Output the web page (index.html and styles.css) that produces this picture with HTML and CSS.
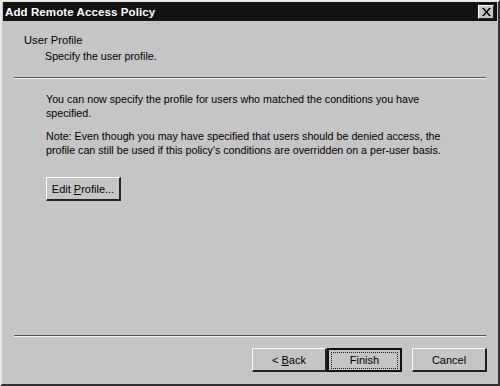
FILE: index.html
```html
<!DOCTYPE html>
<html>
  <head>
    <link rel="stylesheet" href="styles.css">
  </head>
  <body>
    <div id="window">
      <div id="titlebar">
        <span id="title">Add Remote Access Policy</span>
        <button id="closeButton">
          <svg width="9" height="8" viewBox="0 0 9 8">
            <path d="M0 0h2l2.5 3 2.5-3h2l-3.5 4 3.5 4h-2l-2.5-3-2.5 3h-2l3.5-4z" fill="#000"/>
          </svg>
        </button>
      </div>
      <div id="header">
        <p class="headTitle">User Profile</p>
        <p class="headSub">Specify the user profile.</p>
      </div>
      <div class="separator"></div>
      <div id="content">
        <p>You can now specify the profile for users who matched the conditions you have specified.</p>
        <p>Note: Even though you may have specified that users should be denied access, the profile can still be used if this policy's conditions are overridden on a per-user basis.</p>
        <button class="winButton" id="editProfile">Edit <u>P</u>rofile...</button>
      </div>
      <div class="separator"></div>
      <div id="footer">
        <button class="winButton">&lt; <u>B</u>ack</button>
        <button class="winButton default"><span class="focus">Finish</span></button>
        <button class="winButton" id="cancel">Cancel</button>
      </div>
    </div>
  </body>
</html>
```

FILE: styles.css
```css
body {
  margin: 0;
  font-family: 'Liberation Sans', Arial, sans-serif;
  font-size: 10.7px;
  color: #000000;
}

#window {
  width: 500px;
  height: 386px;
  box-sizing: border-box;
  background-color: #c5c5c5;
  border-top: 2px solid #e8e8e8;
  border-left: 2px solid #e8e8e8;
  border-right: 2px solid #333333;
  border-bottom: 2px solid #333333;
  display: flex;
  flex-direction: column;
}

#titlebar {
  margin: 0 1px 0 1px;
  height: 19px;
  background-color: #121212;
  display: flex;
  align-items: center;
  justify-content: space-between;
  padding: 0 3px 0 2px;
}

#title {
  color: #ffffff;
  font-weight: bold;
  font-size: 11.5px;
  letter-spacing: 0.1px;
}

#closeButton {
  width: 16px;
  height: 14px;
  padding: 0;
  background-color: #c5c5c5;
  border-top: 1px solid #ffffff;
  border-left: 1px solid #ffffff;
  border-right: 1px solid #202020;
  border-bottom: 1px solid #202020;
  display: flex;
  align-items: center;
  justify-content: center;
}

#header {
  height: 56px;
  padding: 12px 0 0 22px;
  box-sizing: border-box;
}

#header p {
  margin: 0;
  line-height: 14px;
}

.headTitle {
  font-size: 11.2px;
}

.headSub {
  padding-left: 21px;
  margin-top: 2px !important;
}

.separator {
  margin: 0 12px 0 12px;
  border-top: 1px solid #555555;
  border-bottom: 1px solid #f4f4f4;
}

#content {
  flex: 1;
  padding: 13px 40px 0 44px;
}

#content p {
  margin: 0 0 9px 0;
  line-height: 14px;
}

.winButton {
  font-family: 'Liberation Sans', Arial, sans-serif;
  font-size: 11px;
  color: #000000;
  background-color: #c5c5c5;
  width: 75px;
  height: 24px;
  padding: 0;
  border-top: 1px solid #ffffff;
  border-left: 1px solid #ffffff;
  border-right: 2px solid #222222;
  border-bottom: 2px solid #222222;
}

#editProfile {
  margin-top: 11px;
}

#footer {
  height: 47px;
  display: flex;
  align-items: flex-start;
  padding: 11px 0 0 250px;
  box-sizing: border-box;
}

.default {
  border: 2px solid #111111;
  display: flex;
  align-items: center;
  justify-content: center;
}

.focus {
  border: 1px dotted #222222;
  width: 65px;
  height: 15px;
  line-height: 15px;
}

#cancel {
  margin-left: 10px;
}
```
